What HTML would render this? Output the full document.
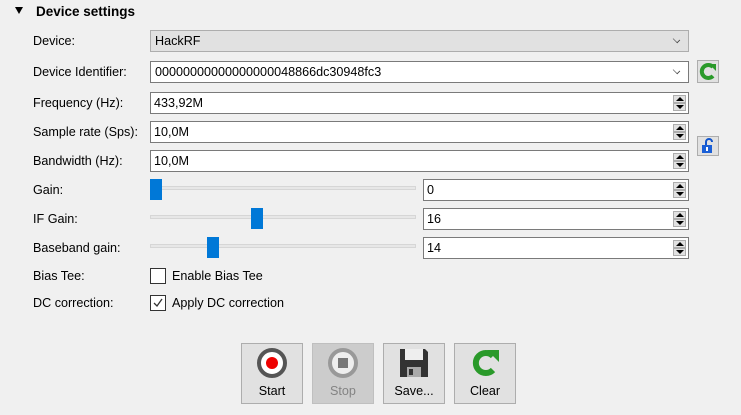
<!DOCTYPE html>
<html><head><meta charset="utf-8"><style>
*{box-sizing:border-box;margin:0;padding:0}
body{width:741px;height:415px;background:#f0f0f0;font-family:"Liberation Sans",Arial,sans-serif;font-size:12.6px;color:#000;position:relative;overflow:hidden}
.a{position:absolute}
.lbl{position:absolute;left:33px;line-height:14px}
.box{position:absolute;background:#fff;border:1px solid #7a7a7a;height:22px;padding-left:3px;line-height:20px}
.combo{position:absolute;border:1px solid #adadad;background:#e1e1e1;height:22px;line-height:20px;padding-left:4px}
.chev{position:absolute;right:8px;top:5px;width:7px;height:7px;border-right:1px solid #444;border-bottom:1px solid #444;transform:rotate(45deg) scale(0.9,0.6)}
.spin{position:absolute;right:2px;top:2px;width:13px;height:16px}
.spin div{height:8px;border:1px solid #adadad;background:#e1e1e1;position:relative}
.up:after{content:"";position:absolute;left:2px;top:1px;border-left:4px solid transparent;border-right:4px solid transparent;border-bottom:4px solid #000}
.dn:after{content:"";position:absolute;left:2px;top:1px;border-left:4px solid transparent;border-right:4px solid transparent;border-top:4px solid #000}
.groove{position:absolute;left:150px;width:266px;height:4px;background:#e7e7e7;border:1px solid #d6d6d6}
.handle{position:absolute;width:12px;height:21px;background:#0078d7}
.btn{position:absolute;top:343px;width:62px;height:61px;border:1px solid #adadad;background:#e1e1e1;text-align:center}
.btn span{position:absolute;left:0;right:0;top:40px}
.cb{position:absolute;left:150px;width:16px;height:16px;border:1px solid #333;background:#fff}
</style></head><body>
<div class="a" style="left:15px;top:7px;border-left:4px solid transparent;border-right:4px solid transparent;border-top:7px solid #000"></div>
<div class="a" style="left:36px;top:4px;font-weight:bold;font-size:13.5px">Device settings</div>

<div class="lbl" style="top:34px">Device:</div>
<div class="combo" style="left:150px;top:30px;width:539px">HackRF<div class="chev"></div></div>

<div class="lbl" style="top:65px">Device Identifier:</div>
<div class="box" style="left:150px;top:61px;width:539px;padding-left:4px">00000000000000000048866dc30948fc3<div class="chev"></div></div>
<div class="a" style="left:697px;top:60px;width:22px;height:23px;border:1px solid #adadad;background:#e1e1e1">
<svg width="20" height="21" viewBox="0 0 20 21"><path d="M15 6 A6.5 6.5 0 1 0 15 15" stroke="#2a9a2a" stroke-width="4" fill="none"/><path d="M11 3 L18 3 L18 10 Z" fill="#2a9a2a"/></svg></div>

<div class="lbl" style="top:96px">Frequency (Hz):</div>
<div class="box" style="left:150px;top:92px;width:539px">433,92M<div class="spin"><div class="up"></div><div class="dn"></div></div></div>
<div class="lbl" style="top:125px">Sample rate (Sps):</div>
<div class="box" style="left:150px;top:121px;width:539px">10,0M<div class="spin"><div class="up"></div><div class="dn"></div></div></div>
<div class="lbl" style="top:154px">Bandwidth (Hz):</div>
<div class="box" style="left:150px;top:150px;width:539px">10,0M<div class="spin"><div class="up"></div><div class="dn"></div></div></div>
<div class="a" style="left:697px;top:136px;width:22px;height:20px;border:1px solid #adadad;background:#e1e1e1">
<svg width="20" height="18" viewBox="0 0 20 18"><path d="M8 8 V5 A3 3 0 0 1 14 5" stroke="#1155cc" stroke-width="2" fill="none"/><rect x="4" y="8" width="10" height="8" fill="#1a5fd6"/><rect x="8" y="10" width="2" height="4" fill="#fff"/></svg></div>

<div class="lbl" style="top:183px">Gain:</div>
<div class="groove" style="top:186px"></div><div class="handle" style="left:150px;top:179px"></div>
<div class="box" style="left:423px;top:179px;width:266px">0<div class="spin"><div class="up"></div><div class="dn"></div></div></div>
<div class="lbl" style="top:212px">IF Gain:</div>
<div class="groove" style="top:215px"></div><div class="handle" style="left:251px;top:208px"></div>
<div class="box" style="left:423px;top:208px;width:266px">16<div class="spin"><div class="up"></div><div class="dn"></div></div></div>
<div class="lbl" style="top:241px">Baseband gain:</div>
<div class="groove" style="top:244px"></div><div class="handle" style="left:207px;top:237px"></div>
<div class="box" style="left:423px;top:237px;width:266px">14<div class="spin"><div class="up"></div><div class="dn"></div></div></div>

<div class="lbl" style="top:269px">Bias Tee:</div>
<div class="cb" style="top:268px"></div><div class="a" style="left:172px;top:269px">Enable Bias Tee</div>
<div class="lbl" style="top:296px">DC correction:</div>
<div class="cb" style="top:295px"><svg width="14" height="14"><path d="M3 7 L6 10 L11 3" stroke="#333" stroke-width="1.3" fill="none"/></svg></div>
<div class="a" style="left:172px;top:296px">Apply DC correction</div>

<div class="btn" style="left:241px"><svg width="34" height="34" style="margin-top:2px"><circle cx="17" cy="17" r="13" fill="#fff" stroke="#555" stroke-width="4"/><circle cx="17" cy="17" r="6" fill="#e00"/></svg><span>Start</span></div>
<div class="btn" style="left:312px;background:#cccccc;border-color:#bfbfbf"><svg width="34" height="34" style="margin-top:2px"><circle cx="17" cy="17" r="13" fill="#eee" stroke="#999" stroke-width="4"/><rect x="12" y="12" width="10" height="10" fill="#777"/></svg><span style="color:#838383">Stop</span></div>
<div class="btn" style="left:383px"><svg width="34" height="34" style="margin-top:2px"><path d="M3 3 H28 L31 6 V31 H3 Z" fill="#333"/><rect x="8" y="3" width="18" height="11" fill="#eee"/><rect x="10" y="21" width="14" height="10" fill="#aaa"/><rect x="12" y="23" width="4" height="6" fill="#333"/></svg><span>Save...</span></div>
<div class="btn" style="left:454px"><svg width="34" height="34" style="margin-top:2px"><path d="M25 10 A10 10 0 1 0 25 24" stroke="#2a9a2a" stroke-width="6" fill="none"/><path d="M19 4 L31 4 L31 16 Z" fill="#2a9a2a"/></svg><span>Clear</span></div>
</body></html>
